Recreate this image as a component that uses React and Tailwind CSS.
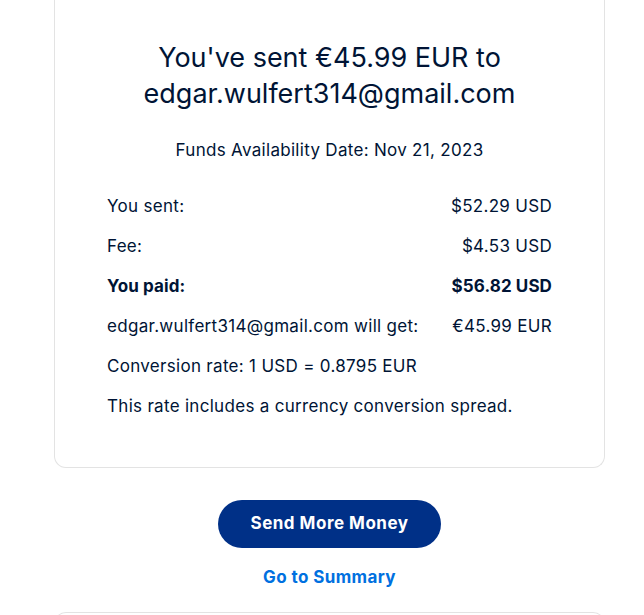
import React from 'react'

const rows = [
  { label: 'You sent:', value: '$52.29 USD' },
  { label: 'Fee:', value: '$4.53 USD' },
  { label: 'You paid:', value: '$56.82 USD', bold: true },
  { label: 'edgar.wulfert314@gmail.com will get:', value: '€45.99 EUR' },
]

export default function App() {
  return (
    <div className="h-[615px] bg-white text-[#001435] font-['Inter',sans-serif] overflow-hidden">
      <div className="ml-[54px] w-[551px]">
        <div className="border-x border-b border-[#e3e3e3] rounded-b-xl px-[52px] pt-[40px] pb-[49px]">
          <h1 className="text-center text-[27px] leading-[36px] font-normal">
            You've sent €45.99 EUR to
            <br />
            edgar.wulfert314@gmail.com
          </h1>
          <p className="mt-[26px] text-center text-[17px] tracking-[0.3px] leading-6">Funds Availability Date: Nov 21, 2023</p>

          <div className="mt-8 flex flex-col gap-4 text-[17px] tracking-[0.3px] leading-6">
            {rows.map((r) => (
              <div key={r.label} className={`flex justify-between ${r.bold ? 'font-bold tracking-[0.1px]' : ''}`}>
                <span>{r.label}</span>
                <span>{r.value}</span>
              </div>
            ))}
            <p>Conversion rate: 1 USD = 0.8795 EUR</p>
            <p>This rate includes a currency conversion spread.</p>
          </div>
        </div>

        <div className="flex flex-col items-center">
          <button className="mt-[32px] h-12 w-[223px] rounded-full bg-[#003087] text-white font-bold text-[17px] tracking-[0.5px]">
            Send More Money
          </button>
          <a className="mt-[17px] leading-6 text-[17px] tracking-[0.4px] font-bold text-[#0070e0]">Go to Summary</a>
        </div>

        <div className="mt-[23px] h-10 border-x border-t border-[#e3e3e3] rounded-t-xl" />
      </div>
    </div>
  )
}
